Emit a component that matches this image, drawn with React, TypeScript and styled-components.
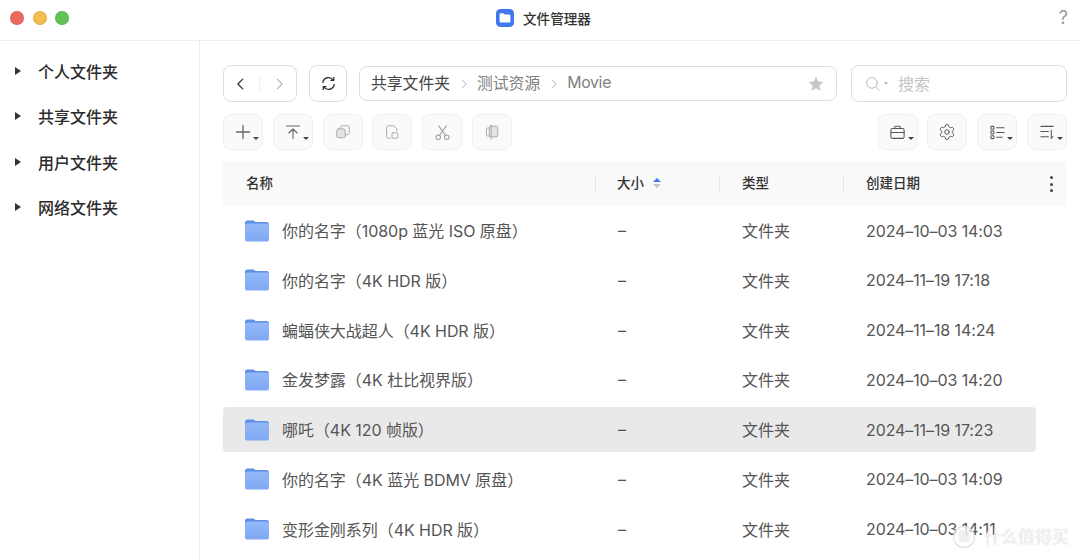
import { FC, ReactNode } from "react";
import styled, { createGlobalStyle } from "styled-components";
import { Settings } from "lucide-react";

const GlobalStyle = createGlobalStyle`
  html, body {
    margin: 0;
    padding: 0;
    height: 100%;
    overflow: hidden;
    background: #fff;
    font-family: Inter, "Noto Sans CJK SC", sans-serif;
    color: #333;
  }
  #root { height: 100%; }
  * { box-sizing: border-box; }
`;

interface FileRow {
  name: string;
  date: string;
  selected?: boolean;
}

const rows: FileRow[] = [
  { name: "你的名字（1080p 蓝光 ISO 原盘）", date: "2024–10–03 14:03" },
  { name: "你的名字（4K HDR 版）", date: "2024–11–19 17:18" },
  { name: "蝙蝠侠大战超人（4K HDR 版）", date: "2024–11–18 14:24" },
  { name: "金发梦露（4K 杜比视界版）", date: "2024–10–03 14:20" },
  { name: "哪吒（4K 120 帧版）", date: "2024–11–19 17:23", selected: true },
  { name: "你的名字（4K 蓝光 BDMV 原盘）", date: "2024–10–03 14:09" },
  { name: "变形金刚系列（4K HDR 版）", date: "2024–10–03 14:11" },
];

const sideItems = ["个人文件夹", "共享文件夹", "用户文件夹", "网络文件夹"];

const Icon: FC<{ size?: number; color?: string; children: ReactNode }> = ({
  size = 18,
  color = "#555",
  children,
}) => (
  <svg
    width={size}
    height={size}
    viewBox="0 0 18 18"
    fill="none"
    stroke={color}
    strokeWidth="1.1"
    strokeLinecap="round"
    strokeLinejoin="round"
  >
    {children}
  </svg>
);

const FolderIcon = () => (
  <svg width="24" height="22" viewBox="0 0 24 22">
    <defs>
      <linearGradient id="folderBody" x1="0" y1="0" x2="0" y2="1">
        <stop offset="0" stopColor="#94b8f8" />
        <stop offset="1" stopColor="#7fa8f3" />
      </linearGradient>
    </defs>
    <path
      d="M0 3c0-1.6 1-2.5 2.5-2.5h5.4c.9 0 1.5.3 2 .9l.6.7h11c1.5 0 2.5.9 2.5 2.5V7H0z"
      fill="#5e8ee6"
    />
    <rect x="0" y="3.4" width="24" height="18.2" rx="2.6" fill="url(#folderBody)" />
  </svg>
);

const AppLogo = () => (
  <svg width="18" height="18" viewBox="0 0 18 18">
    <rect width="18" height="18" rx="4.5" fill="#3f78ee" />
    <path
      d="M3.6 5.6c0-.8.6-1.3 1.3-1.3h2.5l1.3 1.3h4.4c.7 0 1.3.6 1.3 1.3v5.3c0 .8-.6 1.4-1.3 1.4H4.9c-.7 0-1.3-.6-1.3-1.4z"
      fill="#fff"
    />
  </svg>
);

const Page = styled.div`
  height: 100%;
  display: flex;
  flex-direction: column;
  position: relative;
`;

const TitleBar = styled.header`
  height: 41px;
  flex: none;
  display: flex;
  align-items: center;
  justify-content: space-between;
  padding: 0 12px 5px 10px;
  border-bottom: 1px solid #eeeeee;
  position: relative;
`;

const Lights = styled.div`
  display: flex;
  gap: 8.5px;
`;

const Light = styled.span<{ $color: string }>`
  width: 14px;
  height: 14px;
  border-radius: 50%;
  background: ${(p) => p.$color};
  border: 1px solid rgba(0, 0, 0, 0.08);
`;

const AppTitle = styled.div`
  position: absolute;
  left: 496px;
  top: 8px;
  display: flex;
  align-items: center;
  gap: 9px;
  font-size: 13.6px;
  font-weight: 500;
  color: #333;
`;

const Help = styled.span`
  font-size: 18px;
  color: #9a9a9a;
`;

const Body = styled.div`
  flex: 1;
  display: flex;
  min-height: 0;
`;

const Sidebar = styled.nav`
  width: 200px;
  flex: none;
  border-right: 1px solid #eeeeee;
  padding-top: 7.4px;
`;

const SideItem = styled.div`
  height: 45.3px;
  display: flex;
  align-items: center;
  padding-left: 15px;
  gap: 17px;
  font-size: 16px;
  font-weight: 500;
  color: #2b2b2b;
`;

const Caret = styled.span`
  width: 0;
  height: 0;
  border-left: 6px solid #333;
  border-top: 4px solid transparent;
  border-bottom: 4px solid transparent;
`;

const Main = styled.main`
  flex: 1;
  min-width: 0;
  padding: 24px 13px 0 23px;
`;

const NavRow = styled.div`
  display: flex;
  align-items: center;
  height: 37px;
`;

const BoxButton = styled.div<{ $width: number }>`
  width: ${(p) => p.$width}px;
  height: 37px;
  flex: none;
  border: 1px solid #dedede;
  border-radius: 8px;
  display: flex;
  align-items: center;
  justify-content: center;
  background: #fff;
`;

const NavGroup = styled(BoxButton)`
  margin-right: 12px;
  justify-content: space-around;
  padding: 0 4px;
`;

const NavDivider = styled.span`
  width: 1px;
  height: 14px;
  background: #eeeeee;
`;

const Breadcrumb = styled.div`
  width: 478px;
  height: 35px;
  border: 1px solid #dedede;
  border-radius: 8px;
  display: flex;
  align-items: center;
  padding: 0 12px 2px 11px;
  font-size: 15.8px;
  color: #808080;
`;

const Crumb = styled.span<{ $strong?: boolean; $tight?: boolean }>`
  color: ${(p) => (p.$strong ? "#444" : "#808080")};
  letter-spacing: ${(p) => (p.$tight ? "-0.3px" : "0")};
`;

const CrumbSep = styled.span`
  margin: 2px 8.5px 0;
  display: flex;
`;

const Star = styled.span`
  margin-left: auto;
  margin-top: 2px;
  display: flex;
`;

const Search = styled.div`
  width: 216px;
  height: 37px;
  margin-left: auto;
  border: 1px solid #dedede;
  border-radius: 8px;
  display: flex;
  align-items: center;
  padding-left: 13px;
  font-size: 16px;
  color: #c4c4c4;
`;

const SearchLabel = styled.span`
  margin-top: -2px;
`;

const SearchCaret = styled.span`
  width: 0;
  height: 0;
  margin: 0 10px 0 3px;
  border-top: 3px solid #b8b8b8;
  border-left: 2.5px solid transparent;
  border-right: 2.5px solid transparent;
`;

const ActionRow = styled.div`
  display: flex;
  align-items: center;
  gap: 9.8px;
  height: 36px;
  margin-top: 12px;
`;

const ActionButton = styled.div`
  width: 40px;
  height: 36px;
  flex: none;
  border: 1px solid #f0f0f0;
  border-radius: 8px;
  background: #fafafa;
  display: flex;
  align-items: center;
  justify-content: center;
  position: relative;
`;

const Drop = styled.span`
  position: absolute;
  right: 3px;
  bottom: 9px;
  width: 0;
  height: 0;
  border-top: 3.5px solid #444;
  border-left: 3px solid transparent;
  border-right: 3px solid transparent;
`;

const Spacer = styled.div`
  flex: 1;
`;

const Table = styled.section`
  margin-top: 11px;
`;

const columns = "372px 124px 124px 1fr";

const HeaderRow = styled.div`
  height: 45px;
  background: #f9f9f9;
  display: grid;
  grid-template-columns: ${columns};
  align-items: center;
  font-size: 13.5px;
  font-weight: 500;
  color: #333;
  position: relative;
`;

const HeaderCell = styled.div<{ $divider?: boolean }>`
  display: flex;
  align-items: center;
  gap: 9px;
  padding-left: ${(p) => (p.$divider ? "22px" : "23px")};
  padding-bottom: 2px;
  height: 16px;
  line-height: 14px;
  border-left: ${(p) => (p.$divider ? "1px solid #e6e6e6" : "none")};
`;

const SizeHeaderCell = styled(HeaderCell)`
  padding-left: 21px;
`;

const SortArrows = styled.span`
  display: flex;
  flex-direction: column;
  gap: 2px;
`;

const SortArrow = styled.span<{ $up?: boolean }>`
  width: 0;
  height: 0;
  border-left: 4.5px solid transparent;
  border-right: 4.5px solid transparent;
  ${(p) =>
    p.$up ? "border-bottom: 4px solid #3f78ee;" : "border-top: 4px solid #c4c4c4;"}
`;

const Dots = styled.span`
  position: absolute;
  right: 14px;
  top: 15px;
  display: flex;
  flex-direction: column;
  gap: 3.5px;
`;

const Dot = styled.i`
  width: 3px;
  height: 3px;
  border-radius: 50%;
  background: #444;
`;

const RowList = styled.div`
  padding-top: 2px;
  padding-right: 31px;
  display: flex;
  flex-direction: column;
  gap: 4.8px;
`;

const Row = styled.div<{ $selected?: boolean }>`
  height: 45px;
  border-radius: 4px;
  display: grid;
  grid-template-columns: ${columns};
  align-items: center;
  font-size: 16px;
  color: #555;
  background: ${(p) => (p.$selected ? "#e9e9e9" : "transparent")};
`;

const NameCell = styled.div`
  display: flex;
  align-items: center;
  gap: 13px;
  padding-left: 22px;
  letter-spacing: -0.05px;
`;

const NameText = styled.span`
  margin-top: -1px;
`;

const TextCell = styled.div`
  padding-left: 23px;
  margin-top: -1px;
  white-space: nowrap;
`;

const DateCell = styled(TextCell)`
  margin-top: 0;
  letter-spacing: -0.1px;
`;

const Watermark = styled.div`
  position: absolute;
  left: 953px;
  top: 526px;
  display: flex;
  align-items: center;
  gap: 9px;
  font-size: 17px;
  line-height: 22px;
  color: rgba(255, 255, 255, 0.85);
  text-shadow: 0 0 1px rgba(120, 120, 120, 0.5);
`;

const WatermarkBadge = styled.span`
  width: 22px;
  height: 22px;
  border-radius: 50%;
  border: 1.5px solid rgba(215, 215, 215, 0.85);
  display: flex;
  align-items: center;
  justify-content: center;
  font-size: 12px;
  background: rgba(255, 255, 255, 0.7);
`;

export default function App() {
  return (
    <Page>
      <GlobalStyle />
      <TitleBar>
        <Lights>
          <Light $color="#ee6a5f" />
          <Light $color="#f5bd4f" />
          <Light $color="#61c454" />
        </Lights>
        <AppTitle>
          <AppLogo />
          文件管理器
        </AppTitle>
        <Help>?</Help>
      </TitleBar>
      <Body>
        <Sidebar>
          {sideItems.map((item) => (
            <SideItem key={item}>
              <Caret />
              {item}
            </SideItem>
          ))}
        </Sidebar>
        <Main>
          <NavRow>
            <NavGroup $width={74}>
              <Icon size={16} color="#333">
                <path d="M11 3.5 5.5 9l5.5 5.5" strokeWidth="1.5" />
              </Icon>
              <NavDivider />
              <Icon size={16} color="#b5b5b5">
                <path d="m7 3.5 5.5 5.5L7 14.5" strokeWidth="1.3" />
              </Icon>
            </NavGroup>
            <NavGroup $width={38}>
              <Icon size={17} color="#333">
                <path d="M3 8a6 6 0 0 1 11-2.5M15 10a6 6 0 0 1-11 2.5" strokeWidth="1.4" />
                <path d="M14.6 2.6v3h-3M3.4 15.4v-3h3" strokeWidth="1.4" />
              </Icon>
            </NavGroup>
            <Breadcrumb>
              <Crumb $strong>共享文件夹</Crumb>
              <CrumbSep>
                <Icon size={10} color="#b0b0b0">
                  <path d="m6 2 7 7-7 7" strokeWidth="1.8" />
                </Icon>
              </CrumbSep>
              <Crumb>测试资源</Crumb>
              <CrumbSep>
                <Icon size={10} color="#b0b0b0">
                  <path d="m6 2 7 7-7 7" strokeWidth="1.8" />
                </Icon>
              </CrumbSep>
              <Crumb $tight>Movie</Crumb>
              <Star>
                <svg width="16" height="16" viewBox="0 0 16 16">
                  <path
                    d="m8 .8 2.2 4.7 5.1.6-3.8 3.5 1 5.1L8 12.2l-4.5 2.5 1-5.1L.7 6.1l5.1-.6z"
                    fill="#c6c6c6"
                  />
                </svg>
              </Star>
            </Breadcrumb>
            <Search>
              <Icon size={16} color="#b8b8b8">
                <circle cx="7.8" cy="7.8" r="6" />
                <path d="m12.2 12.4 3.6 3.8" />
              </Icon>
              <SearchCaret />
              <SearchLabel>搜索</SearchLabel>
            </Search>
          </NavRow>
          <ActionRow>
            <ActionButton>
              <Icon size={18} color="#666">
                <path d="M9 2.5v13M2.5 9h13" strokeWidth="1.3" />
              </Icon>
              <Drop />
            </ActionButton>
            <ActionButton>
              <Icon size={18} color="#666">
                <path d="M2.5 3h13M9 15.5V6M4.8 10 9 6l4.2 4" />
              </Icon>
              <Drop />
            </ActionButton>
            <ActionButton>
              <Icon size={16} color="#a8a8a8">
                <rect x="2" y="5.5" width="9.5" height="10" rx="2" fill="#e4e4e4" />
                <path d="M6 5V4c0-1.2.8-2 2-2h6c1.2 0 2 .8 2 2v6c0 1.2-.8 2-2 2h-2" />
              </Icon>
            </ActionButton>
            <ActionButton>
              <Icon size={16} color="#a8a8a8">
                <path d="M7 16H5c-1.2 0-2-.8-2-2V4c0-1.2.8-2 2-2h6l3.5 3.5V8" />
                <rect x="9" y="10" width="6.5" height="6" rx="1" />
              </Icon>
            </ActionButton>
            <ActionButton>
              <Icon size={17} color="#a0a0a0">
                <circle cx="4.5" cy="14" r="2.4" />
                <circle cx="13.5" cy="14" r="2.4" />
                <path d="M5.8 12 13 2M12.2 12 5 2" />
              </Icon>
            </ActionButton>
            <ActionButton>
              <Icon size={16} color="#a8a8a8">
                <rect x="6" y="2.5" width="9.5" height="12" rx="1.5" fill="#e4e4e4" />
                <path d="M6 4.5H4c-.8 0-1.2.4-1.2 1.2v6.6c0 .8.4 1.2 1.2 1.2h2M8 1v16" />
              </Icon>
            </ActionButton>
            <Spacer />
            <ActionButton>
              <Icon size={17} color="#555">
                <rect x="2" y="4.8" width="14" height="10.4" rx="1.8" />
                <path d="M6 4.8V3.6c0-.8.4-1.2 1.2-1.2h3.6c.8 0 1.2.4 1.2 1.2v1.2M2 9h14" />
              </Icon>
              <Drop />
            </ActionButton>
            <ActionButton>
              <Settings size={18} color="#555" strokeWidth={1.3} />
            </ActionButton>
            <ActionButton>
              <Icon size={17} color="#555">
                <rect x="2" y="2.5" width="3.2" height="3" rx=".6" />
                <rect x="2" y="7.5" width="3.2" height="3" rx=".6" />
                <rect x="2" y="12.5" width="3.2" height="3" rx=".6" />
                <path d="M8 4h8M8 9h8M8 14h6" />
              </Icon>
              <Drop />
            </ActionButton>
            <ActionButton>
              <Icon size={17} color="#555">
                <path d="M2 2.5h13M2 8h8M2 13.5h8M13 6.5V15" />
                <path d="m13 15 1.6-1.6" />
              </Icon>
              <Drop />
            </ActionButton>
          </ActionRow>
          <Table>
            <HeaderRow>
              <HeaderCell>名称</HeaderCell>
              <SizeHeaderCell $divider>
                大小
                <SortArrows>
                  <SortArrow $up />
                  <SortArrow />
                </SortArrows>
              </SizeHeaderCell>
              <HeaderCell $divider>类型</HeaderCell>
              <HeaderCell $divider>创建日期</HeaderCell>
              <Dots>
                <Dot />
                <Dot />
                <Dot />
              </Dots>
            </HeaderRow>
            <RowList>
              {rows.map((row) => (
                <Row key={row.name} $selected={row.selected}>
                  <NameCell>
                    <FolderIcon />
                    <NameText>{row.name}</NameText>
                  </NameCell>
                  <TextCell>–</TextCell>
                  <TextCell>文件夹</TextCell>
                  <DateCell>{row.date}</DateCell>
                </Row>
              ))}
            </RowList>
          </Table>
        </Main>
      </Body>
      <Watermark>
        <WatermarkBadge>值</WatermarkBadge>
        什么值得买
      </Watermark>
    </Page>
  );
}
